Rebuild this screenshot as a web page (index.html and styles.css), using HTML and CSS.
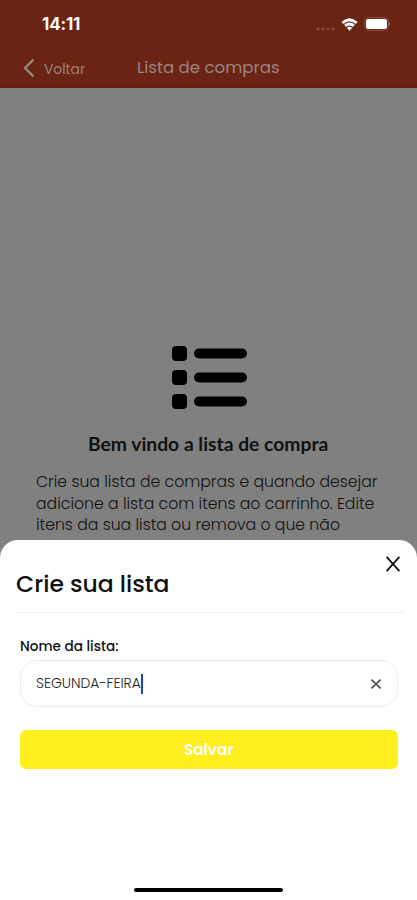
FILE: index.html
```html
<!DOCTYPE html>
<html lang="pt-BR">
<head>
<meta charset="utf-8">
<meta name="viewport" content="width=device-width, initial-scale=1">
<title>Lista de compras</title>
<link rel="stylesheet" href="styles.css">
</head>
<body>
<div class="screen">
  <header class="header">
    <div class="status">
      <span class="clock">14:11</span>
      <div class="status-icons">
        <svg class="dots" width="19" height="4" viewBox="0 0 19 4" fill="#8b5240"><circle cx="2" cy="2" r="1.4"/><circle cx="7" cy="2" r="1.4"/><circle cx="12" cy="2" r="1.4"/><circle cx="17" cy="2" r="1.4"/></svg>
        <svg class="wifi" width="17" height="13" viewBox="0 0 18 14" fill="none" stroke="#fff" stroke-width="3"><path d="M1.3 5.3Q9 -1.7 16.7 5.3"/><path d="M4.3 8.5Q9 4.3 13.7 8.5"/><path d="M9 13.6L6.2 10.6Q9 8.5 11.8 10.6Z" fill="#fff" stroke="none"/></svg>
        <svg class="battery" width="27" height="14" viewBox="0 0 27 14"><rect x=".7" y=".7" width="23.6" height="12.6" rx="4" fill="none" stroke="#8a5546"/><rect x="2" y="2" width="21" height="10" rx="2.5" fill="#fff"/><path d="M25.2 4.8Q27 7 25.2 9.2Z" fill="#b99b90"/></svg>
      </div>
    </div>
    <nav class="nav">
      <a class="back"><svg width="12" height="20" viewBox="0 0 12 20" fill="none" stroke="#9b8a85" stroke-width="2.2"><path d="M10.5 1.5L2 10L10.5 18.5"/></svg><span class="back-label">Voltar</span></a>
      <span class="title">Lista de compras</span>
    </nav>
  </header>
  <main class="empty">
    <svg class="list-icon" width="77" height="65" viewBox="0 0 77 65"><rect x="1" y="1" width="15" height="15" rx="4"/><rect x="23" y="3.5" width="53" height="10" rx="5"/><rect x="1" y="25" width="15" height="15" rx="4"/><rect x="23" y="27.5" width="53" height="10" rx="5"/><rect x="1" y="49" width="15" height="15" rx="4"/><rect x="23" y="51.5" width="53" height="10" rx="5"/></svg>
    <h1 class="welcome">Bem vindo a lista de compra</h1>
    <p class="text">Crie sua lista de compras e quando desejar<br>adicione a lista com itens ao carrinho. Edite<br>itens da sua lista ou remova o que não</p>
  </main>
  <section class="sheet">
    <div class="sheet-head">
      <h2 class="sheet-title">Crie sua lista</h2>
      <svg class="close" width="16" height="18" viewBox="0 0 16 18" fill="none" stroke="#111" stroke-width="1.8"><path d="M1.6 1.8L14.4 16.2M14.4 1.8L1.6 16.2"/></svg>
    </div>
    <div class="form">
      <div class="label">Nome da lista:</div>
      <div class="field">
        <span class="value">SEGUNDA-FEIRA</span><i class="caret"></i>
        <svg class="clear" width="12" height="12" viewBox="0 0 12 12" fill="none" stroke="#555" stroke-width="1.8"><path d="M1.4 1.6L10.6 10.4M10.6 1.6L1.4 10.4"/></svg>
      </div>
      <div class="save">Salvar</div>
    </div>
    <div class="home"></div>
  </section>
</div>
</body>
</html>
```
FILE: styles.css
```css
* { box-sizing: border-box; }
body { margin: 0; font-family: Poppins, Inter, sans-serif; background: #fff; }
.screen { width: 417px; height: 900px; display: flex; flex-direction: column; overflow: hidden; background: #808080; white-space: nowrap; }
svg { display: block; flex: none; }
.header { height: 88px; flex: none; background: #692414; border-bottom: 1px solid #6d190d; }
.status { height: 48px; display: flex; justify-content: space-between; padding: 0 26px 0 42px; align-items: center; }
.clock { font-family: Inter, sans-serif; font-size: 17px; font-weight: 700; color: #fff; letter-spacing: -.2px; }
.status-icons { display: flex; align-items: center; }
.dots { margin: 9px 6px 0 0; }
.wifi { margin-right: 6px; }
.nav { height: 40px; display: flex; align-items: center; padding-left: 23px; color: #9b8580; }
.back { display: flex; align-items: center; width: 114px; }
.back-label { font-size: 13.8px; margin: 3px 0 0 9px; }
.title { font-size: 16.6px; margin-top: -1px; }
.empty { height: 453px; flex: none; padding-top: 257px; color: #111; }
.list-icon { margin-left: 171px; }
.welcome { font: 700 19.3px/24px Lato, sans-serif; margin: 22px 0 0 88px; }
.text { margin: 15px 0 0 36px; font-size: 15.7px; line-height: 21.7px; font-weight: 300; color: #111; }
.sheet { flex: none; height: 360px; margin-top: -1px; background: #fff; border-radius: 18px 18px 0 0; display: flex; flex-direction: column; }
.sheet-head { height: 73px; margin: 0 14px 0 16px; border-bottom: 1px solid #eceff0; display: flex; justify-content: space-between; }
.sheet-title { font-size: 23.5px; line-height: 30px; font-weight: 500; margin: 29px 0 0; color: #111; }
.close { margin: 15px 2px 0 0; }
.form { padding: 0 19.5px 0 20px; }
.label { font-size: 13.6px; line-height: 20px; font-weight: 500; color: #111; margin-top: 24px; }
.field { height: 47px; margin-top: 3px; border: 1px solid #e9ecf1; border-radius: 17px; display: flex; align-items: center; padding: 0 15px; }
.value { font-size: 13.9px; font-weight: 300; color: #222; }
.caret { width: 2px; height: 20px; background: #1748bd; }
.clear { margin-left: auto; }
.save { height: 39px; margin-top: 23px; border-radius: 6px; background: #ffee1d; color: #fff; font-size: 15.3px; font-weight: 600; display: flex; align-items: center; justify-content: center; }
.home { width: 149px; height: 4px; border-radius: 2px; background: #000; margin: auto auto 8px 134px; }
```
